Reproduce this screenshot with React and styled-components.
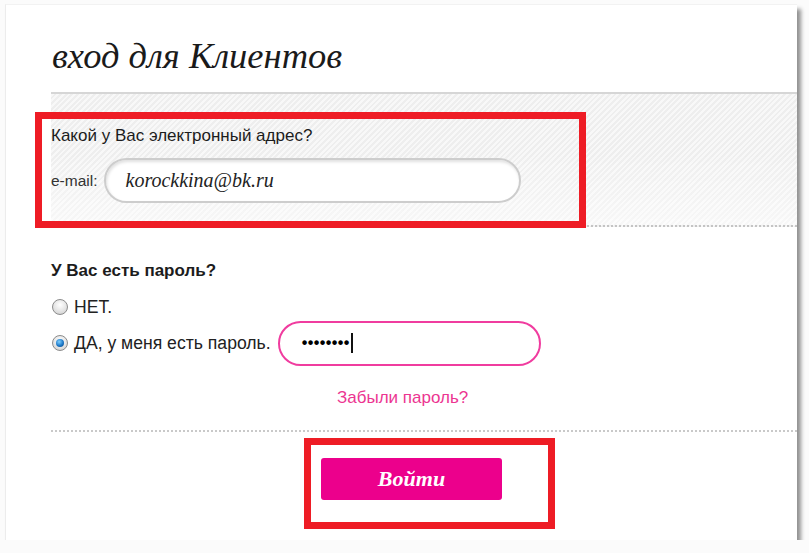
import React from "react";
import styled, { createGlobalStyle } from "styled-components";

const GlobalStyle = createGlobalStyle`
  html, body {
    margin: 0;
    padding: 0;
    background: #fbfbfb;
  }
  body {
    font-family: "Liberation Sans", Arial, sans-serif;
    color: #222;
  }
`;

const Card = styled.div`
  box-sizing: border-box;
  margin: 4px 0 0 5px;
  width: 792px;
  height: 536px;
  background: #fff;
  border-left: 1px solid #ececec;
  border-top: 1px solid #f2f2f2;
  box-shadow: 4px 5px 4px rgba(0, 0, 0, 0.42);
  padding: 30px 0 0 45px;
`;

const Title = styled.h1`
  margin: 0;
  font-family: "Liberation Serif", "Times New Roman", serif;
  font-style: italic;
  font-weight: normal;
  font-size: 36.5px;
  line-height: 42px;
  color: #1a1a1a;
  padding-left: 1px;
`;

const Divider = styled.div`
  margin-top: 15px;
  height: 2px;
  background: #d6d6d6;
`;

const EmailSection = styled.section`
  position: relative;
  height: 133px;
  padding: 32px 0 0 0;
  box-sizing: border-box;
  border-bottom: 2px dotted #c4c4c4;
  background:
    linear-gradient(to bottom, rgba(255, 255, 255, 0) 45%, rgba(255, 255, 255, 0.55) 100%),
    repeating-linear-gradient(
      -45deg,
      #eeeeee 0px,
      #eeeeee 2px,
      #f8f8f8 2px,
      #f8f8f8 4px
    );
`;

const Annotation = styled.div`
  position: absolute;
  box-sizing: border-box;
  border: 7px solid #ee1c25;
  pointer-events: none;
`;

const Question = styled.div`
  font-size: 17px;
  line-height: 20px;
  color: #1c1c1c;
`;

const FieldRow = styled.div`
  display: flex;
  align-items: center;
  gap: 6px;
  margin-top: 12px;
`;

const SmallLabel = styled.span`
  font-size: 15.5px;
  color: #333;
`;

const Field = styled.div`
  box-sizing: border-box;
  display: flex;
  align-items: center;
  flex: none;
  width: ${p => p.$w}px;
  height: 45px;
  margin-left: ${p => p.$ml || 0}px;
  border-radius: 23px;
  border: 2px solid ${p => (p.$focus ? "#f03c9f" : "#cdcdcd")};
  background: #fff;
  box-shadow: ${p =>
    p.$focus ? "none" : "inset 1px 2px 3px rgba(0, 0, 0, 0.12)"};
  padding-left: ${p => p.$pad}px;
`;

const EmailValue = styled.span`
  font-family: "Liberation Serif", "Times New Roman", serif;
  font-style: italic;
  font-size: 20px;
  color: #222;
`;

const Dots = styled.span`
  font-family: "Liberation Sans", Arial, sans-serif;
  font-size: 16px;
  letter-spacing: 0.4px;
  color: #000;
  font-weight: bold;
`;

const Caret = styled.span`
  display: inline-block;
  width: 2px;
  height: 20px;
  background: #111;
  margin-left: 1px;
`;

const PasswordBlock = styled.section`
  padding-top: 34px;
`;

const Heading = styled.div`
  font-size: 17px;
  font-weight: bold;
  line-height: 20px;
  color: #1c1c1c;
`;

const Choice = styled.label`
  display: flex;
  align-items: center;
  gap: 6px;
  font-size: 17.6px;
  color: #222;
  margin-top: ${p => p.$mt}px;
  height: ${p => p.$h}px;
`;

const Radio = styled.span`
  box-sizing: border-box;
  display: inline-flex;
  align-items: center;
  justify-content: center;
  flex: none;
  width: 16px;
  height: 16px;
  border-radius: 50%;
  border: 1px solid #8c8c8c;
  background: radial-gradient(circle at 50% 35%, #ffffff 0%, #e4e4e4 55%, #c9c9c9 100%);
  margin-left: 1px;

  &::after {
    content: "";
    display: ${p => (p.$checked ? "block" : "none")};
    width: 8px;
    height: 8px;
    border-radius: 50%;
    background: radial-gradient(circle at 40% 35%, #7fd0ff 0%, #1c78c8 55%, #0b3f78 100%);
  }
`;

const Forgot = styled.a`
  display: block;
  margin: 22px 0 0 286px;
  font-size: 17px;
  color: #ec3591;
  text-decoration: none;
`;

const DottedRule = styled.div`
  margin-top: 22px;
  border-top: 2px dotted #c9c9c9;
`;

const ButtonArea = styled.div`
  position: relative;
  padding: 26px 0 0 270px;
`;

const Submit = styled.button`
  width: 181px;
  height: 42px;
  border: none;
  border-radius: 3px;
  background: #ec008c;
  color: #fff;
  font-family: "Liberation Serif", "Times New Roman", serif;
  font-style: italic;
  font-weight: bold;
  font-size: 22px;
  cursor: pointer;
`;

export default function App() {
  return (
    <>
      <GlobalStyle />
      <Card>
        <Title>вход для Клиентов</Title>
        <Divider />
        <EmailSection>
          <Question>Какой у Вас электронный адрес?</Question>
          <FieldRow>
            <SmallLabel>e-mail:</SmallLabel>
            <Field $w={417} $pad={20}>
              <EmailValue>korockkina@bk.ru</EmailValue>
            </Field>
          </FieldRow>
          <Annotation style={{ left: -16, top: 18, width: 551, height: 116 }} />
        </EmailSection>
        <PasswordBlock>
          <Heading>У Вас есть пароль?</Heading>
          <Choice $mt={16} $h={20}>
            <Radio />
            НЕТ.
          </Choice>
          <Choice $mt={3} $h={46}>
            <Radio $checked />
            ДА, у меня есть пароль.
            <Field $w={263} $pad={22} $ml={1} $focus>
              <Dots>••••••••</Dots>
              <Caret />
            </Field>
          </Choice>
          <Forgot href="#">Забыли пароль?</Forgot>
        </PasswordBlock>
        <DottedRule />
        <ButtonArea>
          <Submit>Войти</Submit>
          <Annotation style={{ left: 253, top: 6, width: 251, height: 91 }} />
        </ButtonArea>
      </Card>
    </>
  );
}
